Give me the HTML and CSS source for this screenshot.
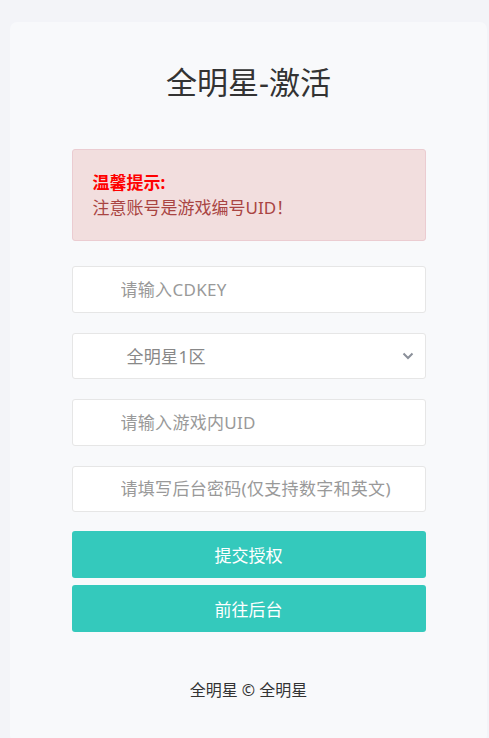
FILE: index.html
```html
<!DOCTYPE html>
<html lang="zh">
<head>
<meta charset="utf-8">
<title>全明星-激活</title>
<link rel="stylesheet" href="styles.css">
</head>
<body>
<div class="card">
  <h1 class="title">全明星-激活</h1>
  <div class="form">
    <div class="alert">
      <div class="alert-head">温馨提示:</div>
      <div class="alert-body">注意账号是游戏编号UID！</div>
    </div>
    <input class="field" type="text" placeholder="请输入CDKEY">
    <div class="select">
      <span class="select-text">全明星1区</span>
      <svg class="chevron" width="12" height="8" viewBox="0 0 12 8"><path d="M1.5 1.5 L6 6 L10.5 1.5" fill="none" stroke="#8b909a" stroke-width="2"/></svg>
    </div>
    <input class="field" type="text" placeholder="请输入游戏内UID">
    <input class="field" type="text" placeholder="请填写后台密码(仅支持数字和英文)">
    <div class="buttons">
      <button class="btn">提交授权</button>
      <button class="btn">前往后台</button>
    </div>
  </div>
  <div class="footer">全明星 © 全明星</div>
</div>
</body>
</html>
```
FILE: styles.css
```css
html, body {
  margin: 0;
  padding: 0;
  background: #f3f4f8;
  font-family: "Noto Sans", "Noto Sans CJK SC", sans-serif;
}
body {
  padding: 22px 2px 0 10px;
  height: 738px;
  box-sizing: border-box;
  overflow: hidden;
}
.card {
  background: #f8f9fb;
  border-radius: 7px;
  height: 720px;
  display: flex;
  flex-direction: column;
  align-items: center;
}
.title {
  margin: 39px 0 0;
  font-size: 31px;
  font-weight: 400;
  color: #333;
  line-height: 42px;
  letter-spacing: 0;
}
.form {
  margin-top: 46px;
  width: 354px;
  display: flex;
  flex-direction: column;
  gap: 20px;
}
.alert {
  box-sizing: border-box;
  height: 92px;
  background: #f2dede;
  border: 1px solid #ebccd1;
  border-radius: 3px;
  padding: 20px 20px 0;
  margin-bottom: 5px;
}
.alert-head {
  color: #ff0000;
  font-weight: 700;
  font-size: 17px;
  line-height: 25px;
}
.alert-body {
  color: #a94442;
  font-size: 17px;
  line-height: 25px;
}
.field, .select {
  box-sizing: border-box;
  width: 354px;
  height: 46.5px;
  background: #fff;
  border: 1px solid #e6e6e6;
  border-radius: 3px;
  font-family: inherit;
  font-size: 17px;
  letter-spacing: 0.3px;
  padding: 0 0 0 48px;
  outline: none;
  color: #555;
}
.field::placeholder {
  color: #999;
}
.select {
  display: flex;
  align-items: center;
  justify-content: space-between;
  padding: 0 11px 0 54px;
}
.select-text {
  color: #888;
  font-size: 17px;
}
.buttons {
  display: flex;
  flex-direction: column;
  gap: 7px;
  margin-top: -1px;
}
.btn {
  height: 47px;
  width: 354px;
  border: none;
  border-radius: 3px;
  background: #34c9bc;
  color: #fff;
  font-family: inherit;
  font-size: 17px;
  padding: 0;
}
.footer {
  margin-top: 46px;
  font-size: 16px;
  color: #333;
  line-height: 24px;
}
```
